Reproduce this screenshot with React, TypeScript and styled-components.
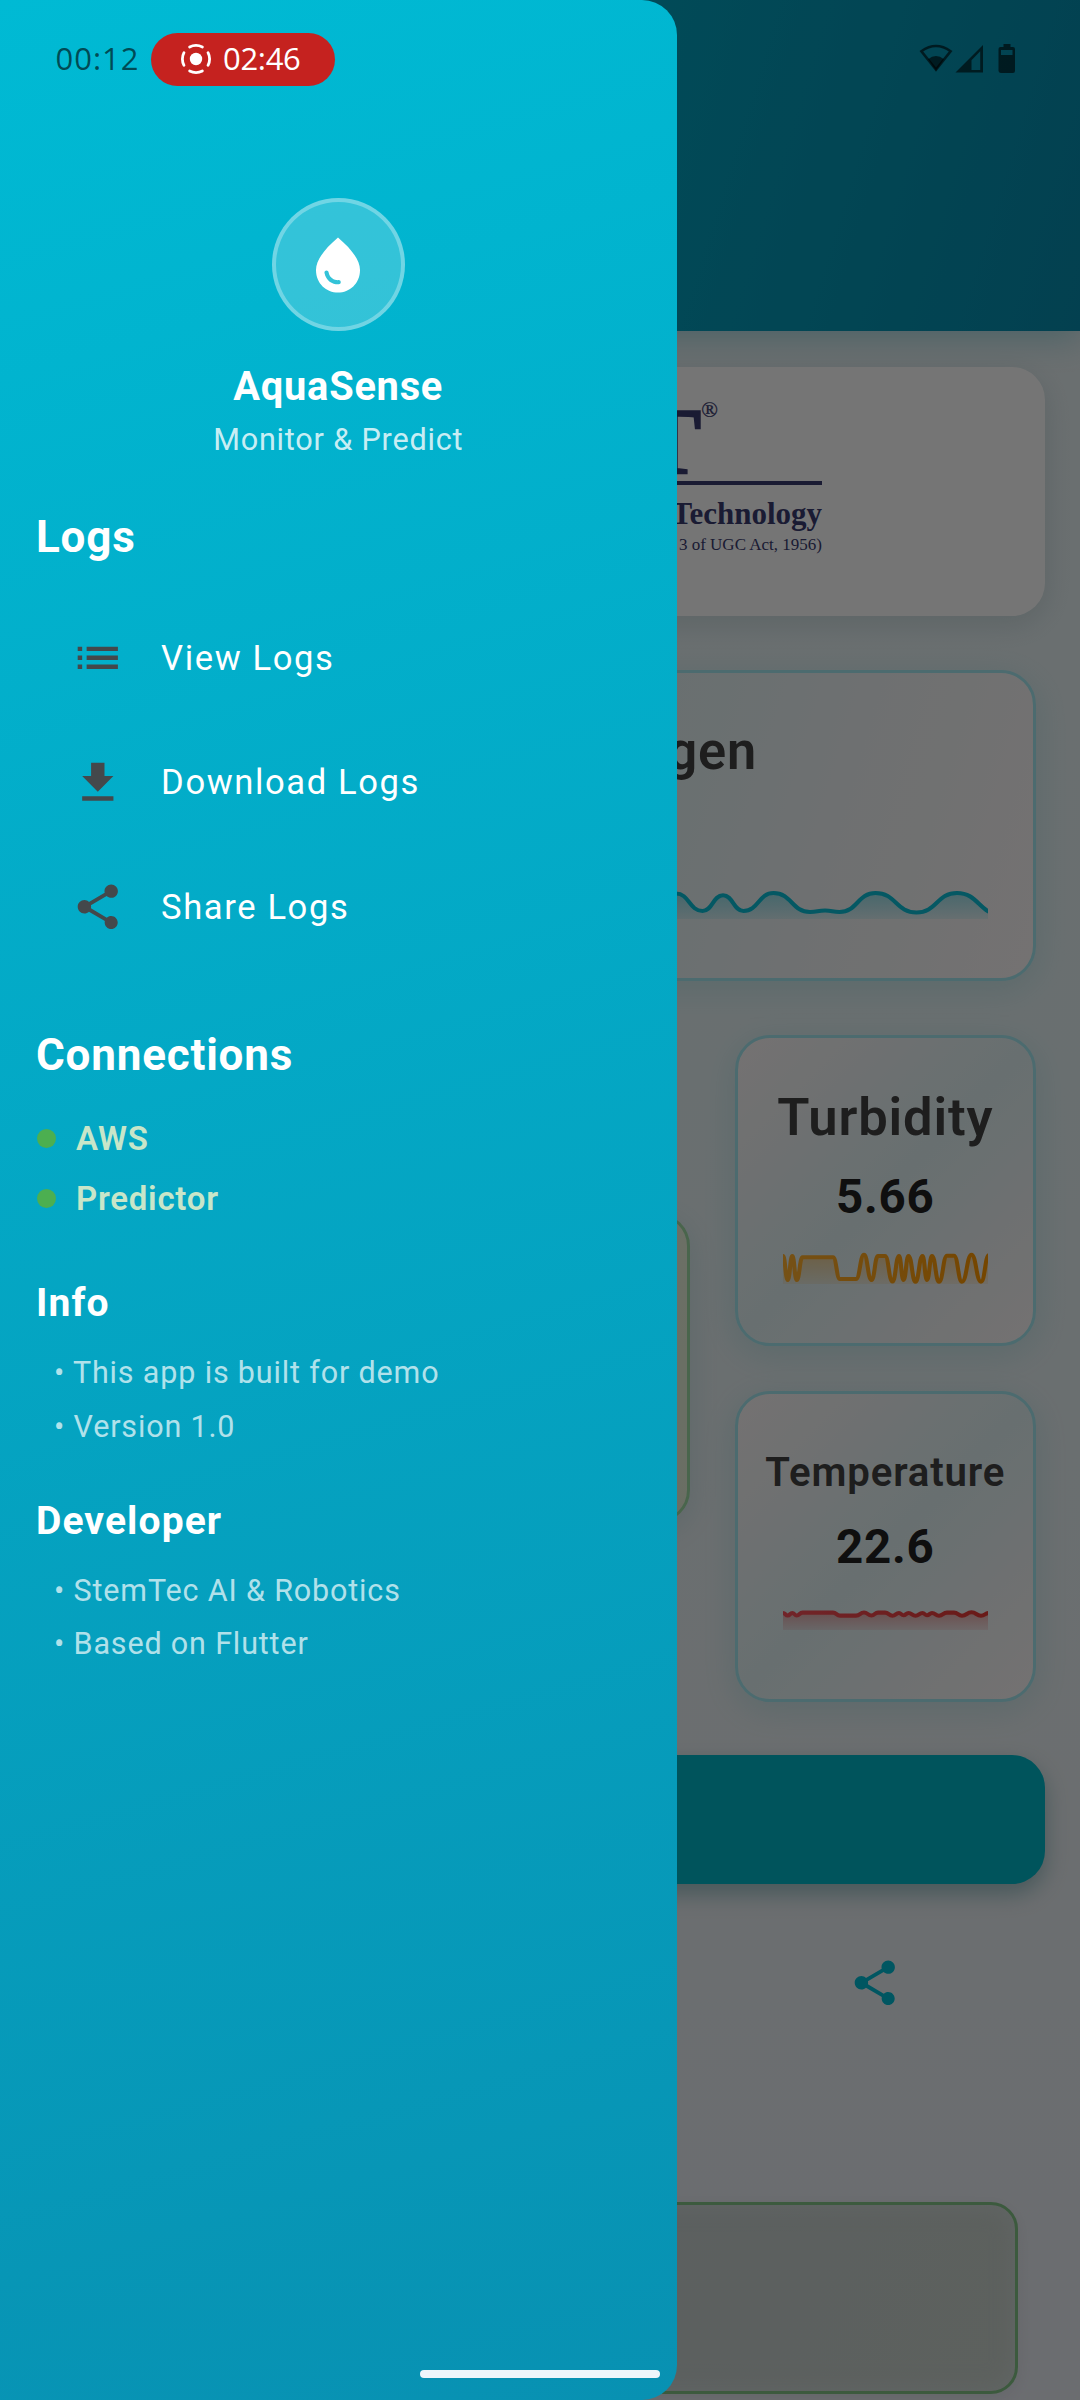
import React from "react";
import styled, { createGlobalStyle } from "styled-components";

const GlobalStyle = createGlobalStyle`
  html, body { margin: 0; padding: 0; background: #fff; }
  * { box-sizing: border-box; }
`;

const Screen = styled.div`
  position: relative;
  width: 1080px;
  height: 2400px;
  overflow: hidden;
  font-family: Roboto, "Noto Sans", sans-serif;
`;

/* ---------- dashboard behind the drawer ---------- */

const Page = styled.main`
  height: 2400px;
  display: flex;
  flex-direction: column;
  background: linear-gradient(180deg, #e8f1f3 0%, #e5f2f4 45%, #eaf0f3 75%, #eaedf4 100%);
`;

const Header = styled.header`
  flex: none;
  height: 331px;
  background: linear-gradient(107deg, #00bcd4, #078dae);
  box-shadow: 0 8px 30px rgba(0, 150, 175, 0.28);
`;

const LogoCard = styled.section`
  flex: none;
  margin: 35.5px 35.5px 0;
  height: 249px;
  border-radius: 33px;
  background: #fff;
  box-shadow: 0 8px 28px rgba(0, 60, 70, 0.12);
  display: flex;
  justify-content: center;
  padding-top: 31px;
`;

const Logo = styled.div`
  width: 564px;
  display: flex;
  flex-direction: column;
  align-items: flex-end;
  font-family: "Liberation Serif", "Times New Roman", serif;
  color: #3a3c70;
  white-space: nowrap;
`;

const LogoMark = styled.div`
  display: flex;
  align-items: flex-start;
  height: 87px;
  width: 100%;
  justify-content: flex-end;
  padding-right: 104px;
  border-bottom: 4px solid currentColor;
`;

const LogoLetters = styled.span`
  font-size: 95px;
  line-height: 96px;
  font-weight: 700;
  margin-top: -4px;
  -webkit-text-stroke: 1.6px currentColor;
`;

const LogoReg = styled.sup`
  font-size: 22px;
  line-height: 22px;
  margin-top: 1px;
  -webkit-text-stroke: 0.3px currentColor;
`;

const LogoName = styled.div`
  font-size: 31px;
  line-height: 36px;
  font-weight: 700;
  margin-top: 11px;
`;

const LogoNote = styled.div`
  font-size: 17px;
  line-height: 20px;
  margin-top: 3px;
`;

const Card = styled.section<{ $top: number; $height?: number }>`
  flex: none;
  height: ${(p) => p.$height ?? 311.5}px;
  padding-top: ${(p) => p.$top}px;
  display: flex;
  flex-direction: column;
  align-items: center;
  border: 3px solid #a5e9f1;
  border-radius: 35px;
  background: linear-gradient(135deg, #fdf8f8 0%, #e2f2f5 50%, #fdf8f8 100%);
  box-shadow: 0 8px 33px rgba(0, 170, 180, 0.14);
`;

const WideCard = styled(Card)`
  margin: 54.5px 44.5px 0;
  background: linear-gradient(107deg, #fdf8f8 0%, #e3f2f5 55%, #fdf8f8 100%);
`;

const CardTitle = styled.h2<{ $size: number; $line: number }>`
  margin: 0;
  font-size: ${(p) => p.$size}px;
  line-height: ${(p) => p.$line}px;
  font-weight: 600;
  letter-spacing: 0.85px;
  color: #424242;
  white-space: nowrap;
`;

const WideTitle = styled(CardTitle)`
  align-self: flex-end;
  margin-right: 275.5px;
`;

const CardValue = styled.div`
  margin-top: 22.8px;
  font-size: 47.5px;
  line-height: 55px;
  font-weight: 700;
  letter-spacing: 0.7px;
  color: #212121;
`;

const ChartSvg = styled.svg<{ $gap: number }>`
  display: block;
  flex: none;
  overflow: hidden;
  margin-top: ${(p) => p.$gap}px;
`;

const Metrics = styled.div`
  flex: none;
  display: grid;
  grid-template-columns: 1fr 300.5px;
  column-gap: 45px;
  align-items: center;
  margin: 54px 44.5px 0;
`;

const MetricColumn = styled.div`
  display: flex;
  flex-direction: column;
  gap: 44.5px;
`;

const StatusCard = styled.section`
  height: 310px;
  border-radius: 33px;
  border: 3px solid #a0dca6;
  background: linear-gradient(135deg, #f1f8e9, #e6f0d8);
  box-shadow: 0 8px 30px rgba(0, 130, 140, 0.12);
`;

const ActionButton = styled.button`
  flex: none;
  display: block;
  margin: 53px 35.5px 0;
  height: 128.5px;
  border: 0;
  border-radius: 33px;
  background: #00b8c9;
  box-shadow: 0 10px 22px rgba(0, 100, 110, 0.34);
`;

const IconRow = styled.div`
  flex: none;
  display: grid;
  grid-template-columns: repeat(3, 1fr);
  justify-items: center;
  margin: 72px 37px 0 34px;
  color: #00bcd4;
`;

const OutputPanel = styled.section`
  flex: none;
  margin: 193px 62px 0;
  height: 191.5px;
  border: 3px solid #84c487;
  border-radius: 27px;
  background: linear-gradient(115deg, #c5cfd6, #cad3cd);
  box-shadow: inset 0 0 22px rgba(226, 232, 234, 0.5), 0 4px 16px rgba(0, 40, 50, 0.07);
`;

const Scrim = styled.div`
  position: absolute;
  inset: 0;
  background: rgba(0, 0, 0, 0.54);
`;

/* ---------- drawer ---------- */

const Drawer = styled.aside`
  position: absolute;
  left: 0;
  top: 0;
  width: 676.5px;
  height: 2400px;
  padding-top: 198px;
  border-radius: 0 35px 35px 0;
  background: linear-gradient(164.2deg, #00bad4, #0891b2);
  color: #fff;
  display: flex;
  flex-direction: column;
`;

const Profile = styled.div`
  display: flex;
  flex-direction: column;
  align-items: center;
`;

const Avatar = styled.div`
  width: 133px;
  height: 133px;
  border-radius: 50%;
  border: 4px solid rgba(255, 255, 255, 0.3);
  background: rgba(255, 255, 255, 0.2);
  display: flex;
  align-items: center;
  justify-content: center;
`;

const AppName = styled.div`
  margin-top: 33px;
  font-size: 39.8px;
  line-height: 46px;
  font-weight: 700;
  letter-spacing: 0.75px;
`;

const Tagline = styled.div`
  margin-top: 11.5px;
  font-size: 30.6px;
  line-height: 36px;
  letter-spacing: 0.8px;
  color: rgba(255, 255, 255, 0.8);
`;

const Heading = styled.h3<{ $gap: number; $small?: boolean }>`
  margin: ${(p) => p.$gap}px 0 0 36px;
  font-size: ${(p) => (p.$small ? 39 : 44)}px;
  line-height: ${(p) => (p.$small ? 46 : 52)}px;
  font-weight: 700;
  letter-spacing: ${(p) => (p.$small ? 1.1 : 0.8)}px;
`;

const Menu = styled.nav`
  margin-top: 33.3px;
`;

const MenuItem = styled.a`
  height: 124.4px;
  padding-left: 71px;
  display: flex;
  align-items: center;
  gap: 36.5px;
  color: #fff;
  font-size: 34.6px;
  letter-spacing: 1.6px;

  svg { color: #44484b; }
`;

const Connections = styled.ul`
  list-style: none;
  margin: 27.5px 0 0 37px;
  padding: 0;
`;

const Connection = styled.li`
  height: 60px;
  display: flex;
  align-items: center;
  gap: 20px;
  font-size: 33px;
  font-weight: 600;
  letter-spacing: 0.75px;
  color: #c8e6c9;
`;

const Dot = styled.span`
  width: 19px;
  height: 19px;
  border-radius: 50%;
  background: #4caf50;
`;

const Notes = styled.div`
  margin: 20px 0 0 54px;
  font-size: 30.5px;
  line-height: 53.2px;
  letter-spacing: 0.84px;
  color: rgba(255, 255, 255, 0.7);
`;

/* ---------- system bars ---------- */

const StatusBar = styled.div`
  position: absolute;
  left: 0;
  right: 0;
  top: 32.5px;
  height: 53.5px;
  padding: 0 63.5px 0 55.5px;
  display: flex;
  align-items: center;
  font-family: "Open Sans", Roboto, sans-serif;
  font-size: 31px;
  line-height: 40px;
  font-weight: 500;
  letter-spacing: 1px;
  color: rgba(0, 0, 0, 0.6);
`;

const Clock = styled.span`
  width: 95.5px;
  padding-bottom: 2px;
`;

const RecordPill = styled.span`
  width: 184px;
  height: 53.5px;
  border-radius: 27px;
  background: #c5221f;
  color: #fff;
  display: flex;
  align-items: center;
  padding-left: 29px;
  gap: 11px;
  margin-right: auto;
  letter-spacing: -0.3px;
`;

const RecordTime = styled.span`
  padding-bottom: 2px;
`;

const HomeIndicator = styled.div`
  position: absolute;
  left: 420px;
  top: 2370px;
  width: 240px;
  height: 8px;
  border-radius: 4px;
  background: #eef6fb;
`;

/* ---------- icons ---------- */

const ICONS = {
  list: "M3 13h2v-2H3v2zm0 4h2v-2H3v2zm0-8h2V7H3v2zm4 4h14v-2H7v2zm0 4h14v-2H7v2zM7 7v2h14V7H7z",
  download: "M19 9h-4V3H9v6H5l7 7 7-7zM5 18v2h14v-2H5z",
  share:
    "M18 16.08c-.76 0-1.44.3-1.96.77L8.91 12.7c.05-.23.09-.46.09-.7s-.04-.47-.09-.7l7.05-4.11c.54.5 1.25.81 2.04.81 1.66 0 3-1.34 3-3s-1.34-3-3-3-3 1.34-3 3c0 .24.04.47.09.7L8.04 9.81C7.5 9.31 6.79 9 6 9c-1.66 0-3 1.34-3 3s1.34 3 3 3c.79 0 1.5-.31 2.04-.81l7.12 4.16c-.05.21-.08.43-.08.65 0 1.61 1.31 2.92 2.92 2.92 1.61 0 2.92-1.31 2.92-2.92s-1.31-2.92-2.92-2.92z",
  drop:
    "M12,2c-5.33,4.55-8,8.48-8,11.8c0,4.98,3.8,8.2,8,8.2s8-3.22,8-8.2C20,10.48,17.33,6.55,12,2z M7.83,14c0.37,0,0.67,0.26,0.74,0.62c0.41,2.22,2.28,2.98,3.64,2.87c0.43-0.02,0.79,0.32,0.79,0.75c0,0.4-0.32,0.73-0.72,0.75c-2.13,0.13-4.62-1.09-5.19-4.12C7.01,14.42,7.37,14,7.83,14z",
};

const Icon = ({ name, size = 53.6 }: { name: keyof typeof ICONS; size?: number }) => (
  <svg width={size} height={size} viewBox="0 0 24 24" fill="currentColor">
    <path d={ICONS[name]} />
  </svg>
);

const RecordIcon = () => (
  <svg width="32" height="32" viewBox="-16 -16 32 32" fill="none">
    <circle r="6.2" fill="#fff" />
    <circle r="13.6" stroke="#fff" strokeWidth="2.8" strokeLinecap="round" pathLength={360} strokeDasharray="56 34" strokeDashoffset="28" />
  </svg>
);

const SystemIcons = () => (
  <svg width="98" height="30" viewBox="0 0 98 30" fill="currentColor">
    <path d="M2.4 7.2 Q17 -3.2 31.6 7.2 L17 25.6 Z" fill="none" stroke="currentColor" strokeWidth="2.6" />
    <path d="M9 15.2 Q17 8.6 25 15.2 L17 26.5 Z" />
    <path fillRule="evenodd" d="M36.5 28.5 L64 1 V28.5 Z M52.5 16.2 V26 H61.2 V7.2 Z" />
    <path fillRule="evenodd" d="M84.500 0h7v3h2.5a2 2 0 0 1 2 2v22a2 2 0 0 1-2 2h-12a2.500 2.500 0 0 1-2.500-2V5a2 2 0 0 1 2-2H84.500z M82 6v5h11.500v-5z" />
  </svg>
);

/* ---------- charts ---------- */

type Pt = [number, number];

const smooth = (pts: Pt[]) =>
  pts.reduce((d, [x, y], i) => {
    if (i === 0) return `M${x} ${y}`;
    const [px, py] = pts[i - 1];
    const m = (px + x) / 2;
    return `${d} C${m} ${py} ${m} ${y} ${x} ${y}`;
  }, "");

interface SparkProps {
  id: string;
  pts: Pt[];
  width: number;
  height: number;
  gap: number;
  from: string;
  to: string;
}

const Spark = ({ id, pts, width, height, gap, from, to }: SparkProps) => {
  const line = smooth(pts);
  const last = pts[pts.length - 1][0];
  return (
    <ChartSvg $gap={gap} width={width} height={height} viewBox={`0 0 ${width} ${height}`}>
      <defs>
        <linearGradient id={`${id}-line`} gradientUnits="userSpaceOnUse" x1="0" y1="0" x2={width} y2="0">
          <stop offset="0" stopColor={from} />
          <stop offset="1" stopColor={to} />
        </linearGradient>
        <linearGradient id={`${id}-fill`} x1="0" y1="0" x2="0" y2="1">
          <stop offset="0" stopColor={to} stopOpacity="0.38" />
          <stop offset="1" stopColor={to} stopOpacity="0.1" />
        </linearGradient>
      </defs>
      <path d={`${line} L${last} ${height} L${pts[0][0]} ${height} Z`} fill={`url(#${id}-fill)`} />
      <path d={line} fill="none" stroke={`url(#${id}-line)`} strokeWidth="4.1" strokeLinejoin="round" />
    </ChartSvg>
  );
};

const OXYGEN: Pt[] = [
  [0, 14], [60, 32], [130, 13], [200, 32], [270, 13], [340, 32], [400, 13], [450, 32], [500, 13], [545, 32],
  [584, 13.5], [610.5, 31], [631, 15.2], [651.5, 31], [681.5, 13], [718, 32], [733, 30.5], [747.5, 32],
  [783.5, 13], [824.5, 32.5], [865, 13], [909, 34.5],
];

const TURBIDITY: Pt[] = [
  [0, 6], [4.7, 30], [9.3, 6], [13.7, 30], [19.5, 7.3], [50, 7.3], [57, 29], [73, 29], [81, 4.8],
  [88.5, 30], [95, 6], [102, 6], [109.5, 31.5], [116, 6], [120.5, 30], [125.5, 6], [132.5, 31.7],
  [139.5, 6], [144, 30], [149, 6], [156, 31.7], [164, 5.7], [171, 5.7], [179, 31.7], [188.5, 4.8],
  [198, 31.7], [206, 5],
];

const TEMPERATURE: Pt[] = [
  [0, 5], [4.7, 7.5], [9.3, 5], [13.7, 7.5], [19.5, 4.6], [50, 4.6], [57, 7.6], [73, 7.6], [81, 4.5],
  [88.5, 7.5], [95, 4.6], [102, 4.6], [109.5, 7.7], [116, 5], [120.5, 7.2], [125.5, 5], [132.5, 7.7],
  [139.5, 5], [144, 7.2], [149, 5], [156, 7.7], [164, 4.6], [171, 4.6], [179, 7.7], [188.5, 4.3],
  [198, 7.7], [206, 5],
];

export default function App() {
  return (
    <Screen>
      <GlobalStyle />
      <Page>
        <Header />
        <LogoCard>
          <Logo>
            <LogoMark>
              <LogoLetters>T</LogoLetters>
              <LogoReg>®</LogoReg>
            </LogoMark>
            <LogoName>Technology</LogoName>
            <LogoNote>section 3 of UGC Act, 1956)</LogoNote>
          </Logo>
        </LogoCard>
        <WideCard $top={47.5} $height={310.5}>
          <WideTitle $size={52.25} $line={62}>Oxygen</WideTitle>
          <Spark id="oxygen" pts={OXYGEN} width={896} height={39} gap={97.5} from="#00bcd4" to="#0cc0d8" />
        </WideCard>
        <Metrics>
          <StatusCard />
          <MetricColumn>
            <Card $top={48.2}>
              <CardTitle $size={52.5} $line={62}>Turbidity</CardTitle>
              <CardValue>5.66</CardValue>
              <Spark id="turbidity" pts={TURBIDITY} width={205} height={34} gap={24.2} from="#ffb030" to="#ff9800" />
            </Card>
            <Card $top={55.4}>
              <CardTitle $size={40.2} $line={48}>Temperature</CardTitle>
              <CardValue>22.6</CardValue>
              <Spark id="temperature" pts={TEMPERATURE} width={205} height={22} gap={33.7} from="#f6505a" to="#e53935" />
            </Card>
          </MetricColumn>
        </Metrics>
        <ActionButton />
        <IconRow>
          <Icon name="list" />
          <Icon name="download" />
          <Icon name="share" />
        </IconRow>
        <OutputPanel />
      </Page>

      <Scrim />

      <Drawer>
        <Profile>
          <Avatar>
            <Icon name="drop" size={66} />
          </Avatar>
          <AppName>AquaSense</AppName>
          <Tagline>Monitor &amp; Predict</Tagline>
        </Profile>
        <Heading $gap={53}>Logs</Heading>
        <Menu>
          <MenuItem><Icon name="list" />View Logs</MenuItem>
          <MenuItem><Icon name="download" />Download Logs</MenuItem>
          <MenuItem><Icon name="share" />Share Logs</MenuItem>
        </Menu>
        <Heading $gap={60}>Connections</Heading>
        <Connections>
          <Connection><Dot />AWS</Connection>
          <Connection><Dot />Predictor</Connection>
        </Connections>
        <Heading $gap={52} $small>Info</Heading>
        <Notes>
          <div>• This app is built for demo</div>
          <div>• Version 1.0</div>
        </Notes>
        <Heading $gap={45} $small>Developer</Heading>
        <Notes>
          <div>• StemTec AI &amp; Robotics</div>
          <div>• Based on Flutter</div>
        </Notes>
      </Drawer>

      <StatusBar>
        <Clock>00:12</Clock>
        <RecordPill>
          <RecordIcon />
          <RecordTime>02:46</RecordTime>
        </RecordPill>
        <SystemIcons />
      </StatusBar>
      <HomeIndicator />
    </Screen>
  );
}
